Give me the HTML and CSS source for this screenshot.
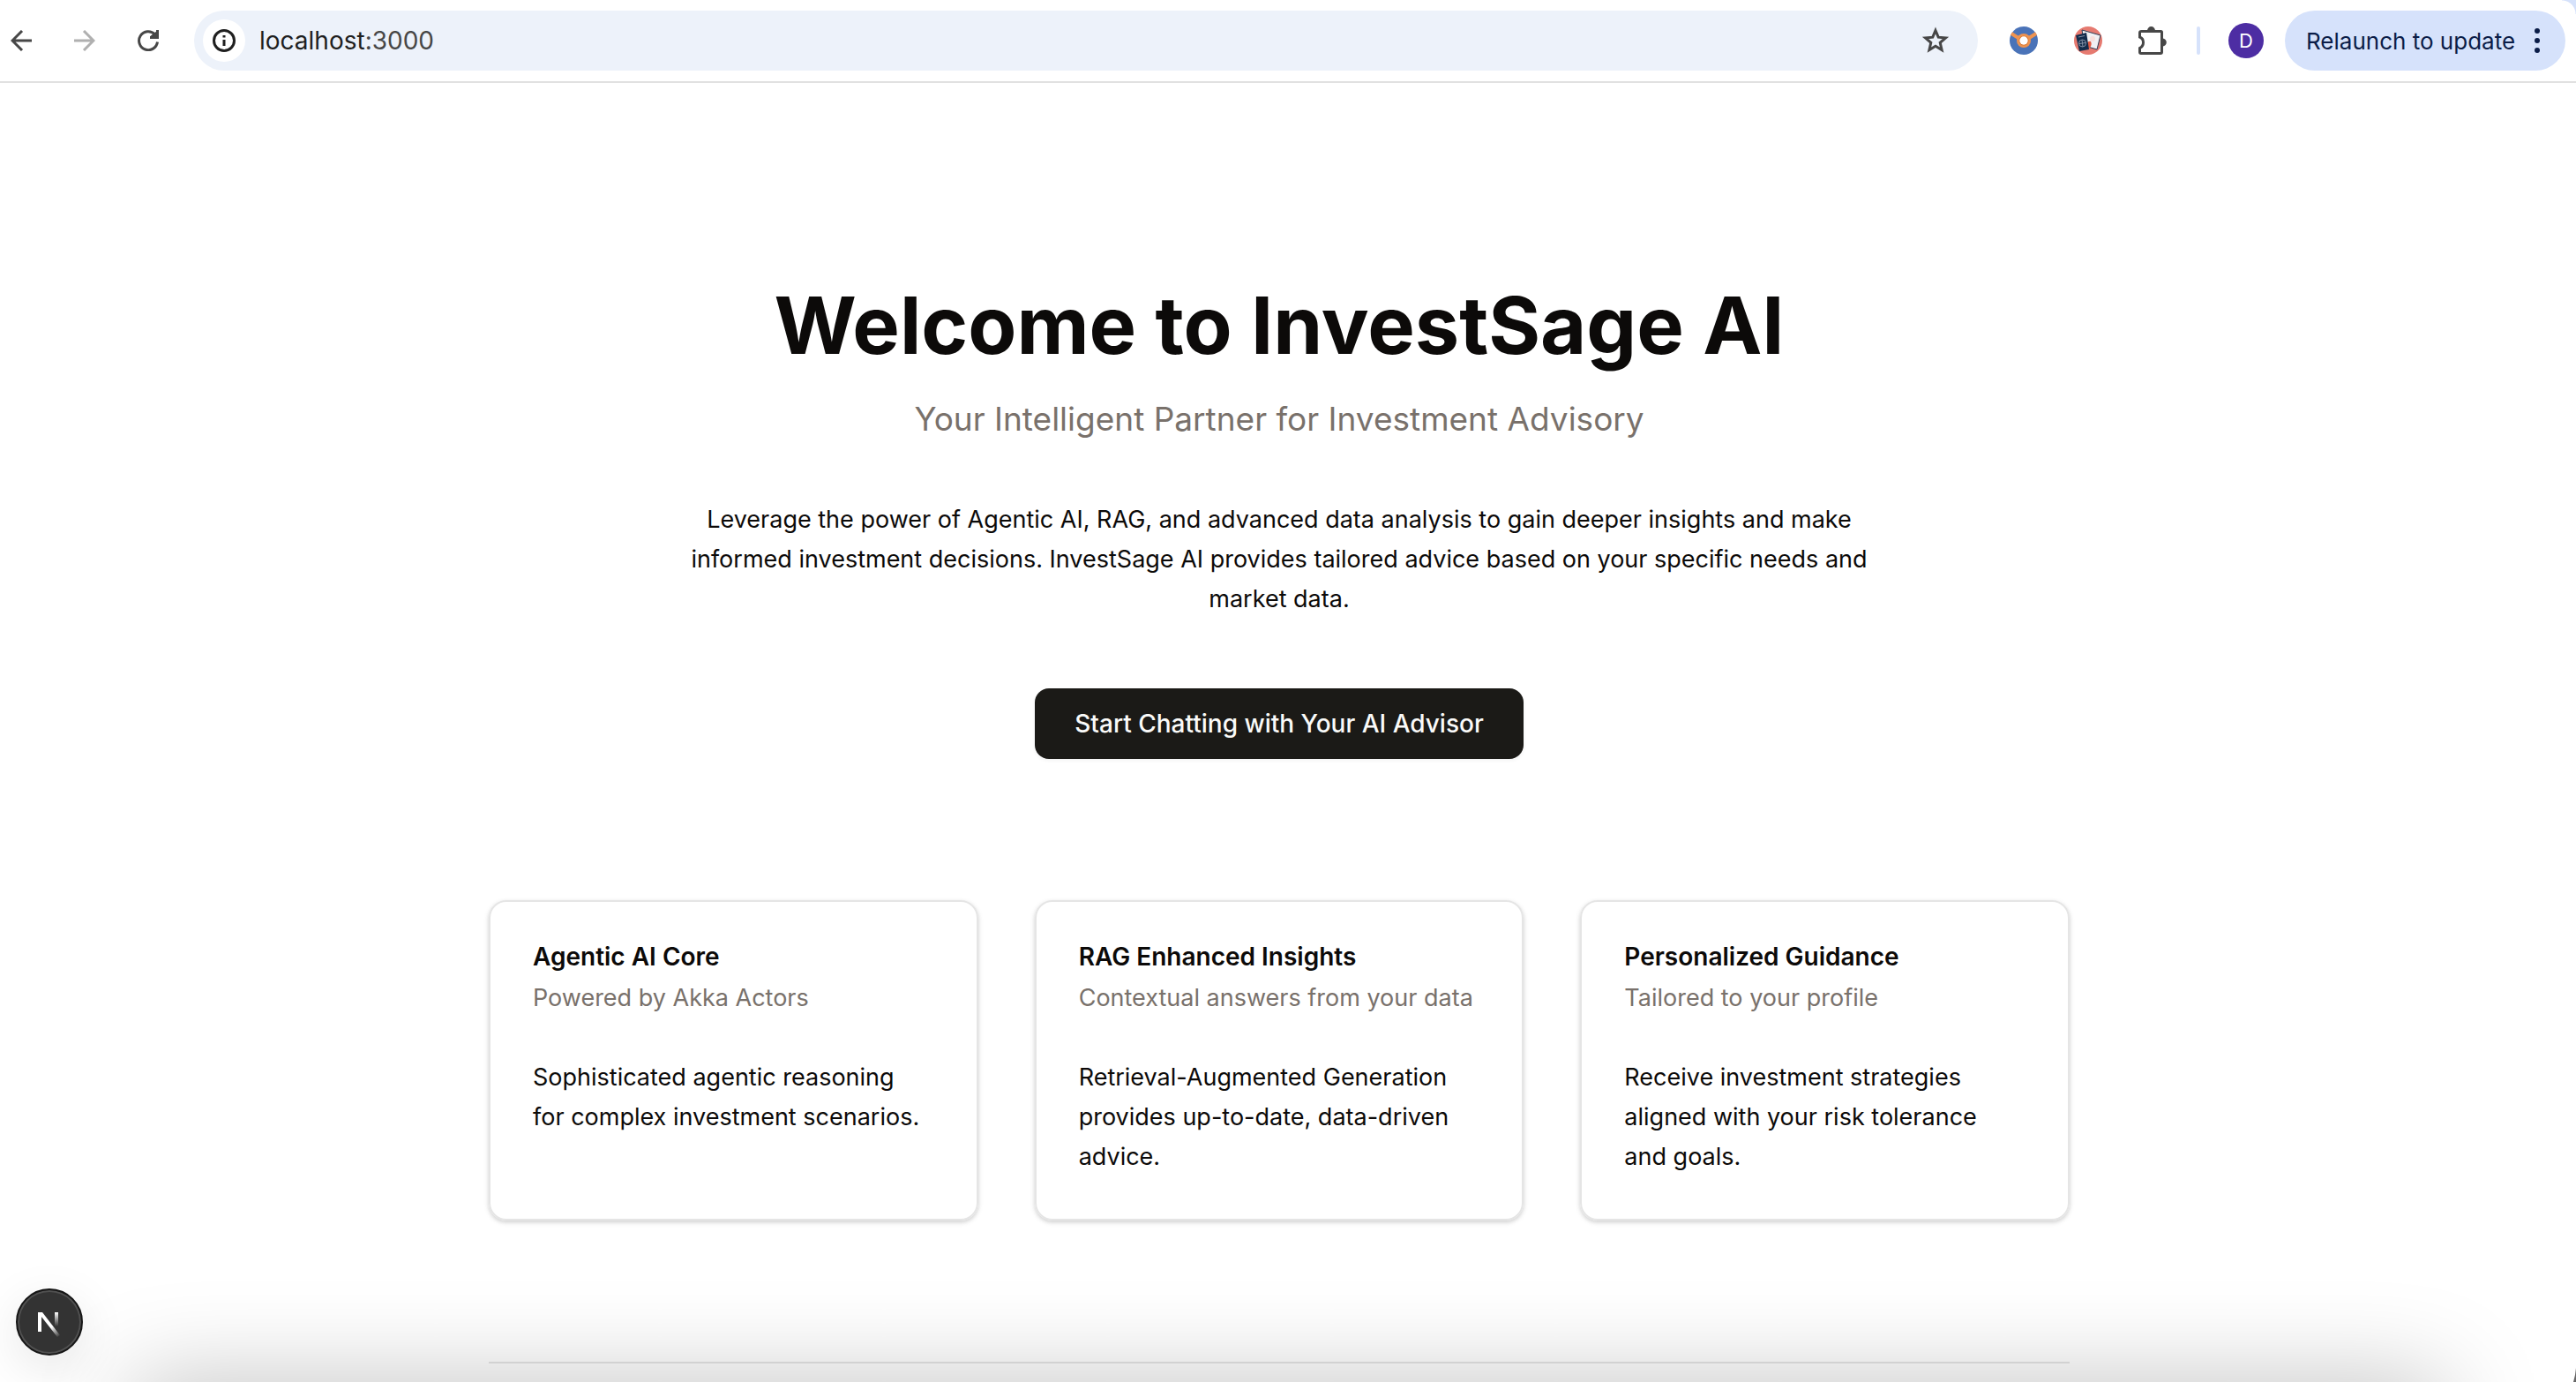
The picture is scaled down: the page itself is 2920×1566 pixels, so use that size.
FILE: index.html
```html
<!DOCTYPE html>
<html lang="en">
<head>
<meta charset="utf-8">
<title>InvestSage AI</title>
<link rel="stylesheet" href="styles.css">
</head>
<body>
<header class="toolbar">
  <nav class="nav-buttons" aria-label="History">
    <button class="icon-button" type="button" aria-label="Back">
      <svg width="24" height="24" viewBox="0 0 24 24" fill="none" stroke="#474747" stroke-width="3"><path d="M24 12H2M13 1L2 12L13 23"/></svg>
    </button>
    <button class="icon-button" type="button" aria-label="Forward" disabled>
      <svg width="24" height="24" viewBox="0 0 24 24" fill="none" stroke="#b0b0b0" stroke-width="3"><path d="M0 12H22M11 1L22 12L11 23"/></svg>
    </button>
    <button class="icon-button" type="button" aria-label="Reload">
      <svg width="24" height="24" viewBox="0 0 24 24" fill="none" stroke="#474747" stroke-width="3"><path d="M22.500 13.500A10.500 10.500 0 1 1 19.500 4.700"/><path d="M22.500 0V8.500H14M15.500 8L22 3" /><path d="M16 8L22 2V8Z" fill="#474747" stroke="none"/></svg>
    </button>
  </nav>
  <div class="address">
    <button class="site-info" type="button" aria-label="Site information">
      <svg width="28" height="28" viewBox="0 0 28 28" fill="none" stroke="#1f1f1f" stroke-width="3"><circle cx="14" cy="14" r="11.500"/><path d="M14 13V20M14 8V10.500"/></svg>
    </button>
    <div class="url">localhost<span class="port">:3000</span></div>
    <button class="icon-button" type="button" aria-label="Bookmark this tab">
      <svg width="32" height="32" viewBox="0 0 32 32" fill="none" stroke="#474747" stroke-width="3"><path d="M16 4.500L19.200 12.200L27.500 12.900L21.200 18.400L23.100 26.500L16 22.200L8.900 26.500L10.800 18.400L4.500 12.900L12.800 12.200Z"/></svg>
    </button>
  </div>
  <div class="extensions">
    <button class="icon-button" type="button" aria-label="First extension">
      <svg width="32" height="32" viewBox="0 0 32 32"><circle cx="16" cy="16" r="16" fill="#4a73b8"/><path d="M2 8L10 13M30 8L22 13" stroke="#ee9350" stroke-width="4"/><circle cx="16" cy="16" r="8" fill="#ee9350"/><circle cx="16" cy="16" r="5.500" fill="#d9752e"/><circle cx="16" cy="16" r="4.700" fill="#fff"/></svg>
    </button>
    <button class="icon-button" type="button" aria-label="Second extension">
      <svg width="32" height="32" viewBox="0 0 32 32"><circle cx="16" cy="16" r="16" fill="#e67a70"/><path d="M9 4L30 10L26 26L12 22Z" fill="#f1f1f3" stroke="#2d3e55" stroke-width="1"/><circle cx="21" cy="14" r="3" fill="#f8dfdb"/><path d="M14 22Q15 16 19 17Q21 21 17 25Z" fill="#e5583f"/><path d="M2 10L14 7L17 26L6 28Z" fill="#132c4b"/><circle cx="9.500" cy="19" r="4" fill="none" stroke="#8391a5"/><path d="M6 19.500L13 18.500M9 15L10 23M5 12L12 10.500" stroke="#8391a5"/></svg>
    </button>
    <button class="icon-button" type="button" aria-label="Extensions">
      <svg width="32" height="32" viewBox="0 0 32 32"><path d="M3.500 5.500H25.500Q26.500 5.500 26.500 6.500V29Q26.500 30.500 25 30.500H3Q1.500 30.500 1.500 29V24.500Q5.500 22.500 5.500 18Q5.500 13.500 1.500 12V7Q1.500 5.500 3.500 5.500Z" fill="none" stroke="#474747" stroke-width="3"/><path d="M10 5A4.500 5 0 0 1 19 5ZM27 13.500A4.800 4.500 0 0 1 27 22.500Z" fill="#474747"/></svg>
    </button>
    <span class="divider"></span>
  </div>
  <button class="avatar" type="button" aria-label="Profile">D</button>
  <button class="relaunch" type="button">Relaunch to update
    <svg width="6" height="28" viewBox="0 0 6 28" fill="#0b1d48"><circle cx="3" cy="3" r="3"/><circle cx="3" cy="14" r="3"/><circle cx="3" cy="25" r="3"/></svg>
  </button>
</header>
<div class="viewport">
  <main class="page">
    <section class="hero">
      <h1 class="hero-title">Welcome to InvestSage AI</h1>
      <p class="hero-subtitle">Your Intelligent Partner for Investment Advisory</p>
      <p class="hero-text">Leverage the power of Agentic AI, RAG, and advanced data analysis to gain deeper insights and make informed investment decisions. InvestSage AI provides tailored advice based on your specific needs and market data.</p>
      <a class="cta" href="#chat">Start Chatting with Your AI Advisor</a>
    </section>
    <section class="cards">
      <article class="card">
        <h2 class="card-title">Agentic AI Core</h2>
        <p class="card-subtitle">Powered by Akka Actors</p>
        <p class="card-text">Sophisticated agentic reasoning for complex investment scenarios.</p>
      </article>
      <article class="card">
        <h2 class="card-title">RAG Enhanced Insights</h2>
        <p class="card-subtitle">Contextual answers from your data</p>
        <p class="card-text">Retrieval-Augmented Generation provides up-to-date, data-driven advice.</p>
      </article>
      <article class="card">
        <h2 class="card-title">Personalized Guidance</h2>
        <p class="card-subtitle">Tailored to your profile</p>
        <p class="card-text">Receive investment strategies aligned with your risk tolerance and goals.</p>
      </article>
    </section>
    <hr class="rule">
  </main>
</div>
<div class="bottom-shade"></div>
<div class="window-corner"></div>
<button class="dev-badge" type="button" aria-label="Open Next.js Dev Tools">
  <svg width="72" height="72" viewBox="0 0 72 72" fill="none">
    <defs>
      <linearGradient id="diag" gradientUnits="userSpaceOnUse" x1="38" y1="42" x2="47" y2="53"><stop stop-color="#fff"/><stop offset="1" stop-color="#fff" stop-opacity="0"/></linearGradient>
      <linearGradient id="stem" gradientUnits="userSpaceOnUse" x1="0" y1="25" x2="0" y2="41"><stop stop-color="#fff"/><stop offset="1" stop-color="#fff" stop-opacity="0"/></linearGradient>
    </defs>
    <path d="M23 47V25H27V47Z" fill="#fff"/>
    <path d="M23 25H28L48 51L45 53Z" fill="url(#diag)"/>
    <path d="M42 25H46V41H42Z" fill="url(#stem)"/>
  </svg>
</button>
</body>
</html>
```
FILE: styles.css
```css
* {
  box-sizing: border-box;
}

body {
  margin: 0;
  min-height: 100vh;
  background: #fff;
  color: #0c0a09;
  font-family: Inter, "Liberation Sans", sans-serif;
  font-size: 27px;
  line-height: 45px;
}

h1, h2, p {
  margin: 0;
}

button {
  border: 0;
  padding: 0;
  background: none;
  font: inherit;
  color: inherit;
}

svg {
  display: block;
}

.toolbar {
  display: flex;
  align-items: center;
  height: 94px;
  padding: 0 12px;
  border-bottom: 2px solid #e1e1e1;
  background: radial-gradient(circle at 0 100%, #fff 15px, #d6e2fb 16px) top right / 16px 16px no-repeat #fff;
}

.nav-buttons {
  display: flex;
  gap: 48px;
}

.icon-button {
  flex: none;
}

.address {
  flex: 1;
  display: flex;
  align-items: center;
  height: 68px;
  margin-left: 40px;
  padding: 0 32px 0 10px;
  border-radius: 34px;
  background: #edf2fa;
}

.site-info {
  display: grid;
  place-items: center;
  width: 48px;
  height: 48px;
  border-radius: 50%;
  background: #fff;
}

.url {
  flex: 1;
  margin-left: 16px;
  color: #1f1f1f;
  font-size: 28px;
}

.port {
  color: #474747;
}

.extensions {
  display: flex;
  align-items: center;
  gap: 41px;
  margin-left: 36px;
}

.divider {
  width: 4px;
  height: 32px;
  margin-left: -7px;
  border-radius: 2px;
  background: #d6e2fb;
}

.avatar {
  width: 40px;
  height: 40px;
  margin-left: 32px;
  border-radius: 50%;
  background: #4d2da3;
  color: #fff;
  font-size: 22px;
  line-height: 40px;
}

.relaunch {
  display: flex;
  align-items: center;
  justify-content: space-between;
  width: 318px;
  height: 68px;
  margin-left: 24px;
  padding: 0 29px 0 24px;
  border-radius: 34px;
  background: #d6e2fb;
  color: #0b1d48;
  font-size: 26px;
  white-space: nowrap;
}

.viewport {
  padding-right: 20px;
}

.page {
  max-width: 1792px;
  margin: 0 auto;
  padding-top: 227px;
}

.hero {
  display: flex;
  flex-direction: column;
  align-items: center;
  text-align: center;
}

.hero-title {
  font-size: 90px;
  line-height: 96px;
  font-weight: 700;
}

.hero-subtitle {
  margin-top: 30px;
  color: #79716b;
  font-size: 37px;
  line-height: 56px;
}

.hero-text {
  max-width: 1344px;
  margin-top: 63px;
}

.cta {
  margin-top: 79px;
  padding: 0 45px;
  border-radius: 16px;
  background: #1b1a17;
  box-shadow: 0 2px 4px rgba(0, 0, 0, 0.05);
  color: #fafaf9;
  font-size: 28px;
  font-weight: 500;
  line-height: 80px;
  text-decoration: none;
}

.cards {
  display: grid;
  grid-template-columns: repeat(3, 1fr);
  gap: 64px;
  margin-top: 160px;
}

.card {
  padding: 48px;
  border: 2px solid #e5e5e5;
  border-radius: 20px;
  box-shadow: 0 2px 6px rgba(0, 0, 0, 0.1), 0 2px 4px rgba(0, 0, 0, 0.1);
}

.card-title {
  font-size: 28px;
  line-height: 28px;
  font-weight: 600;
}

.card-subtitle {
  margin-top: 10px;
  color: #79716b;
}

.card-text {
  margin-top: 45px;
  padding-right: 12px;
}

.rule {
  height: 2px;
  margin: 160px 0 0;
  border: 0;
  background: #e5e5e5;
}

.bottom-shade {
  position: fixed;
  right: 150px;
  bottom: -100px;
  left: 150px;
  height: 100px;
  box-shadow: 0 0 110px rgba(0, 0, 0, 0.25);
}

.window-corner {
  position: fixed;
  right: 0;
  bottom: 0;
  width: 3px;
  height: 16px;
  background: #666;
  clip-path: polygon(100% 0, 100% 100%, 0 100%, 66% 50%);
}

.dev-badge {
  position: fixed;
  bottom: 30px;
  left: 18px;
  width: 76px;
  height: 76px;
  border: 2px solid #161616;
  border-radius: 50%;
  background: #333;
  box-shadow: inset 0 0 0 2px #505050, 0 16px 56px rgba(0, 0, 0, 0.1);
}
```
